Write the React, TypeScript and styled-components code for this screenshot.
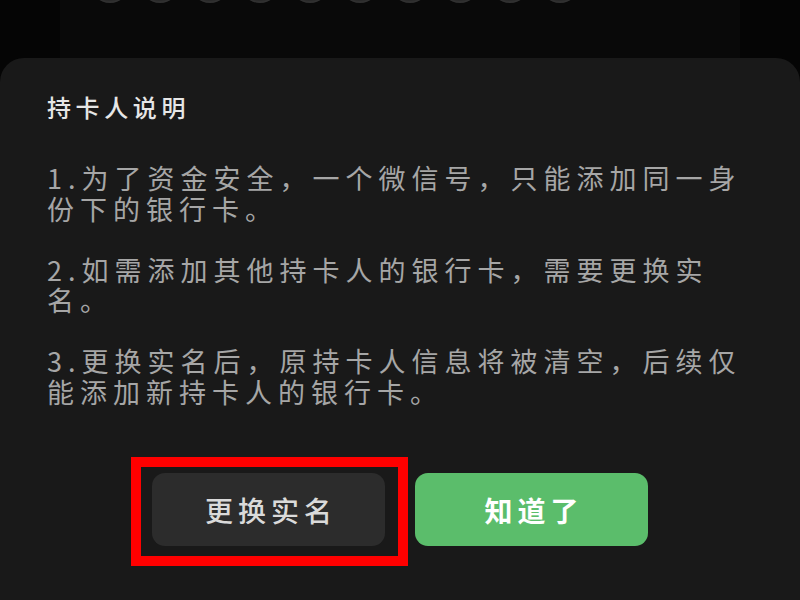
import styled, { createGlobalStyle } from "styled-components";

const GlobalStyle = createGlobalStyle`
  html, body {
    margin: 0;
    padding: 0;
    background: #050505;
    overflow: hidden;
  }

  body {
    font-family: "Noto Sans CJK SC", "Noto Sans", sans-serif;
  }
`;

const Screen = styled.div`
  height: 600px;
  display: flex;
  flex-direction: column;
`;

const Backdrop = styled.div`
  height: 58px;
  flex-shrink: 0;
  padding: 0 60px;
`;

const KeyPanel = styled.div`
  height: 100%;
  background: #090909;
  display: flex;
  align-items: flex-start;
  gap: 10px;
  padding-left: 30px;
`;

const Dot = styled.span`
  width: 40px;
  height: 40px;
  margin-top: -37px;
  border-radius: 50%;
  background: #262626;
  box-shadow: inset 0 -2px 2px rgba(255, 255, 255, 0.06);
`;

const Sheet = styled.div`
  flex: 1;
  background: #191919;
  border-radius: 24px 24px 0 0;
  padding: 34px 47px 0;
`;

const Title = styled.h2`
  margin: 0;
  font-size: 24px;
  font-weight: 500;
  line-height: 30px;
  letter-spacing: 4.6px;
  color: #e6e6e6;
`;

const Notes = styled.div`
  margin-top: 41px;
`;

const Note = styled.p`
  margin: 0 0 30.5px;
  font-size: 27px;
  line-height: 30.5px;
  letter-spacing: 6px;
  color: #a6a6a6;

  &:last-child {
    margin-bottom: 0;
  }
`;

const Actions = styled.div`
  margin-top: 66px;
  display: flex;
  justify-content: center;
  gap: 30px;
`;

const Marked = styled.div`
  position: relative;
`;

const Highlight = styled.div`
  position: absolute;
  top: -16px;
  left: -21px;
  right: -23px;
  bottom: -20px;
  border: 10px solid #ff0000;
  pointer-events: none;
`;

const Button = styled.button<{ $primary?: boolean }>`
  width: 233px;
  height: 73px;
  border: none;
  border-radius: 13px;
  padding: 0 0 0 5px;
  font-family: inherit;
  font-size: 28px;
  letter-spacing: 5px;
  font-weight: ${(p) => (p.$primary ? 700 : 500)};
  color: ${(p) => (p.$primary ? "#ffffff" : "#dadada")};
  background: ${(p) => (p.$primary ? "#5bbd6b" : "#2c2c2c")};
  cursor: pointer;
`;

const notes = [
  "1.为了资金安全，一个微信号，只能添加同一身份下的银行卡。",
  "2.如需添加其他持卡人的银行卡，需要更换实名。",
  "3.更换实名后，原持卡人信息将被清空，后续仅能添加新持卡人的银行卡。",
];

const App = () => {
  return (
    <Screen>
      <GlobalStyle />
      <Backdrop>
        <KeyPanel>
          {Array.from({ length: 10 }).map((_, i) => (
            <Dot key={i} />
          ))}
        </KeyPanel>
      </Backdrop>
      <Sheet>
        <Title>持卡人说明</Title>
        <Notes>
          {notes.map((n) => (
            <Note key={n}>{n}</Note>
          ))}
        </Notes>
        <Actions>
          <Marked>
            <Button>更换实名</Button>
            <Highlight />
          </Marked>
          <Button $primary>知道了</Button>
        </Actions>
      </Sheet>
    </Screen>
  );
};

export default App;
